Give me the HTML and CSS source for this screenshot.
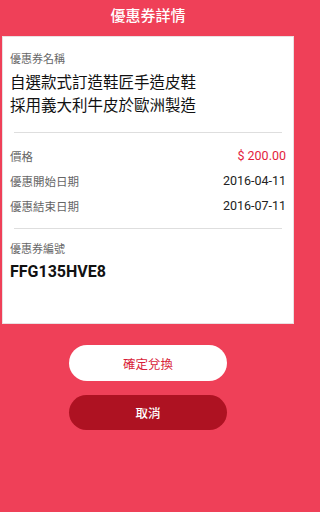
FILE: index.html
```html
<!DOCTYPE html>
<html lang="zh-Hant">
<head>
<meta charset="utf-8">
<meta name="viewport" content="width=296">
<title>優惠券詳情</title>
<link rel="stylesheet" href="styles.css">
</head>
<body>
<header class="topbar">優惠券詳情</header>
<main class="page">
  <section class="card">
    <div class="label">優惠券名稱</div>
    <div class="name">自選款式訂造鞋匠手造皮鞋<br>採用義大利牛皮於歐洲製造</div>
    <hr class="divider">
    <div class="rows">
      <div class="row"><span class="row-label">價格</span><span class="row-value price">$ 200.00</span></div>
      <div class="row"><span class="row-label">優惠開始日期</span><span class="row-value">2016-04-11</span></div>
      <div class="row"><span class="row-label">優惠結束日期</span><span class="row-value">2016-07-11</span></div>
    </div>
    <hr class="divider divider-low">
    <div class="label label-code">優惠券編號</div>
    <div class="code">FFG135HVE8</div>
  </section>
  <div class="actions">
    <button class="btn btn-confirm">確定兌換</button>
    <button class="btn btn-cancel">取消</button>
  </div>
</main>
</body>
</html>
```
FILE: styles.css
```css
* { box-sizing: border-box; }
html {
  background: #ef4058;
}
html, body {
  margin: 0;
  padding: 0;
  font-family: Roboto, "Noto Sans CJK TC", "Noto Sans", sans-serif;
}
body {
  width: 296px;
  min-height: 512px;
  background: #ef4058;
}
.topbar {
  height: 36px;
  padding-top: 5px;
  line-height: 22px;
  font-size: 15px;
  font-weight: 500;
  color: #fff;
  text-align: center;
}
.page {
  padding: 0 2px;
}
.card {
  background: #fff;
  border: 1px solid #eadfe2;
  height: 288px;
  padding: 15px 7px 0;
}
.label {
  font-size: 11px;
  line-height: 16px;
  color: #666;
}
.name {
  margin-top: 4px;
  font-size: 15.5px;
  line-height: 23px;
  color: #111;
}
.divider {
  border: 0;
  border-top: 1px solid #dedede;
  margin: 14px 4px 0;
  height: 0;
}
.rows {
  margin-top: 10px;
}
.row {
  display: flex;
  justify-content: space-between;
  align-items: center;
  height: 25px;
}
.row-label {
  font-size: 11.5px;
  color: #666;
}
.row-value {
  font-size: 12.5px;
  color: #222;
}
.price {
  color: #e31c3d;
}
.divider-low {
  margin-top: 10px;
}
.label-code {
  margin-top: 13px;
}
.code {
  margin-top: 3px;
  font-size: 16px;
  line-height: 22px;
  font-weight: 700;
  color: #111;
}
.actions {
  display: flex;
  flex-direction: column;
  align-items: center;
  gap: 14px;
  margin-top: 21px;
}
.btn {
  width: 158px;
  height: 36px;
  border: 0;
  border-radius: 18px;
  font-family: Roboto, "Noto Sans CJK TC", sans-serif;
  font-size: 12.5px;
  padding: 0;
}
.btn-confirm {
  background: #fff;
  color: #d81f3a;
}
.btn-cancel {
  height: 35px;
  background: #ae1222;
  color: #fff;
  font-weight: 500;
}
```
